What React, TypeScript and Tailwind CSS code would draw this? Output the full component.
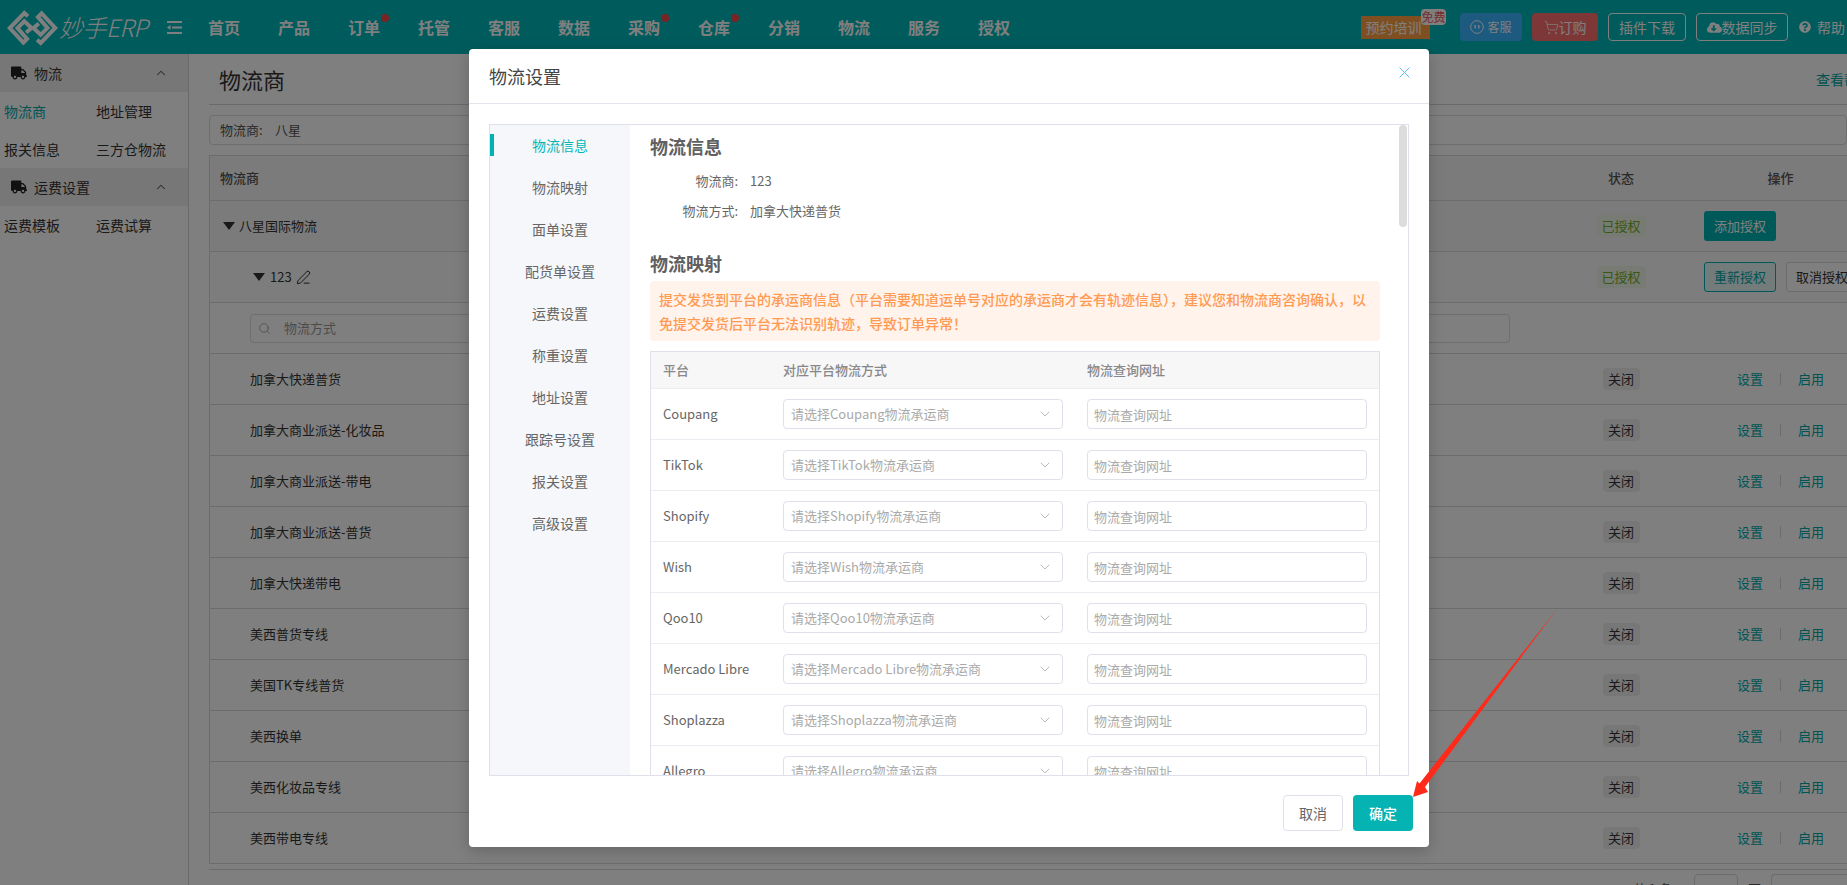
import { ChevronDown, ChevronUp, PenLine, Search, ShoppingCart } from 'lucide-react';
import { FaCloudDownloadAlt, FaQuestionCircle, FaTruck } from 'react-icons/fa';

const navItems = [
  { label: '首页' },
  { label: '产品' },
  { label: '订单', dot: true },
  { label: '托管' },
  { label: '客服' },
  { label: '数据' },
  { label: '采购', dot: true },
  { label: '仓库', dot: true },
  { label: '分销' },
  { label: '物流' },
  { label: '服务' },
  { label: '授权' },
];

const shippingRows = [
  '加拿大快递普货',
  '加拿大商业派送-化妆品',
  '加拿大商业派送-带电',
  '加拿大商业派送-普货',
  '加拿大快递带电',
  '美西普货专线',
  '美国TK专线普货',
  '美西换单',
  '美西化妆品专线',
  '美西带电专线',
];

const settingTabs = ['物流信息', '物流映射', '面单设置', '配货单设置', '运费设置', '称重设置', '地址设置', '跟踪号设置', '报关设置', '高级设置'];

const platforms = ['Coupang', 'TikTok', 'Shopify', 'Wish', 'Qoo10', 'Mercado Libre', 'Shoplazza', 'Allegro'];

function Logo() {
  return (
    <svg width="55" height="40" viewBox="0 0 60 44" fill="none" stroke="#ffffff" strokeWidth="4.4" className="mt-px shrink-0">
      <path d="M25 9 L21 5.5 L5 22 L20 38 L24 34 L13.5 22 L21 14.5 L29 22 L23 27" />
      <path d="M35 35 L39 38.5 L55 22 L40 6 L36 10 L46.5 22 L39 29.5 L31 22 L37 17" />
    </svg>
  );
}

function MenuToggle() {
  return (
    <svg width="15" height="13" viewBox="0 0 15 13" fill="#ffffff" className="shrink-0">
      <rect x="0" y="0" width="15" height="2" />
      <rect x="5" y="5.5" width="10" height="2" />
      <rect x="0" y="11" width="15" height="2" />
      <path d="M3.5 4 L0 6.5 L3.5 9 Z" />
    </svg>
  );
}

function SideGroup({ title, items }: { title: string; items: { label: string; active?: boolean }[] }) {
  return (
    <div>
      <div className="flex h-[38px] items-center bg-[#eeeeee] pl-[11px] pr-[20px] text-[14px] text-[#333]">
        <FaTruck size={16} className="text-[#222]" />
        <span className="ml-[7px] flex-1">{title}</span>
        <ChevronUp size={14} strokeWidth={1.75} className="text-[#555]" />
      </div>
      <div className="grid grid-cols-[92px_1fr] pl-1 text-[14px]">
        {items.map((item) => (
          <div key={item.label} className={`flex h-[38px] items-center whitespace-nowrap ${item.active ? 'text-[#00a8a8]' : 'text-[#333]'}`}>
            {item.label}
          </div>
        ))}
      </div>
    </div>
  );
}

function Caret() {
  return <span className="h-0 w-0 border-x-[6.5px] border-t-[8px] border-x-transparent border-t-[#333]" />;
}

function MainPage() {
  return (
    <main className="w-[1638px] shrink-0 pl-0 text-[#333]">
      <div className="flex h-[51px] items-center justify-between border-b border-[#d4d4d4] pl-[10px]">
        <h1 className="text-[22px] font-normal text-[#333]">物流商</h1>
        <a className="mr-[-25px] whitespace-nowrap text-[14px] text-[#00a8a8]">查看帮助</a>
      </div>

      <div className="mt-[10px] flex h-[30px] items-center rounded-[4px] border border-[#dcdcdc] pl-[10px] text-[13px] text-[#555]">
        <span className="w-[55px]">物流商:</span>
        <span>八星</span>
      </div>

      <div className="mt-[10px] border-l border-t border-[#d9d9d9]">
        <div className="flex h-[45px] items-center border-b border-[#d9d9d9] bg-[#f7f7f7] text-[13px] font-medium text-[#555]">
          <span className="flex-1 pl-[10px]">物流商</span>
          <span className="w-[122px] text-center">状态</span>
          <span className="w-[165px] pl-[32px] text-center">操作</span>
        </div>

        <div className="flex h-[51px] items-center border-b border-[#d9d9d9] bg-[#f7f7f7] text-[13px]">
          <div className="flex flex-1 items-center pl-[13px]">
            <Caret />
            <span className="ml-1">八星国际物流</span>
          </div>
          <div className="flex w-[122px] justify-center">
            <span className="flex h-[22px] w-[49px] items-center justify-center rounded-[4px] bg-[#eef7e6] text-[#6eb02e]">已授权</span>
          </div>
          <div className="w-[165px] pl-[22px]">
            <button className="h-[30px] w-[72px] rounded-[3px] bg-[#00b3b3] text-white">添加授权</button>
          </div>
        </div>

        <div className="flex h-[51px] items-center border-b border-[#d9d9d9] bg-[#fafafa] text-[13px]">
          <div className="flex flex-1 items-center pl-[43px]">
            <Caret />
            <span className="ml-[5px]">123</span>
            <PenLine size={15} strokeWidth={1.5} className="ml-1 text-[#222]" />
          </div>
          <div className="flex w-[122px] justify-center">
            <span className="flex h-[22px] w-[49px] items-center justify-center rounded-[4px] bg-[#eef7e6] text-[#6eb02e]">已授权</span>
          </div>
          <div className="flex w-[165px] shrink-0 gap-[10px] pl-[22px]">
            <button className="h-[30px] w-[72px] shrink-0 rounded-[3px] border border-[#00b3b3] bg-[#e6f7f7] text-[#00a8a8]">重新授权</button>
            <button className="h-[30px] w-[72px] shrink-0 rounded-[3px] border border-[#d9d9d9] bg-white text-[#333]">取消授权</button>
          </div>
        </div>

        <div className="flex h-[51px] items-center border-b border-[#d9d9d9] pl-10">
          <div className="flex h-[29px] w-[1260px] items-center rounded-[4px] border border-[#dcdcdc] pl-[7px] text-[13px] text-[#999]">
            <Search size={13} strokeWidth={1.25} className="text-[#888]" />
            <span className="ml-[13px]">物流方式</span>
          </div>
        </div>

        {shippingRows.map((name) => (
          <div key={name} className="flex h-[51px] items-center border-b border-[#d9d9d9] text-[13px]">
            <span className="flex-1 pl-10">{name}</span>
            <div className="flex w-[122px] justify-center">
              <span className="flex h-[22px] w-[37px] items-center justify-center rounded-[4px] bg-[#eeeeee]">关闭</span>
            </div>
            <div className="flex w-[165px] items-center pl-[55px] text-[#00a8a8]">
              <span>设置</span>
              <span className="mx-[17px] h-3 w-px bg-[#d9d9d9]" />
              <span>启用</span>
            </div>
          </div>
        ))}
      </div>

      <div className="mt-[5px] flex h-10 items-start justify-end gap-[10px] border-t border-[#d9d9d9] pt-1 text-[13px] text-[#555]">
        <span className="mt-[5px] pr-[12px]">共 1 条</span>
        <span className="h-8 w-11 rounded-[4px] border border-[#d9d9d9]" />
        <span className="mt-[5px]">页</span>
        <span className="h-8 w-[76px] rounded-l-[4px] border border-r-0 border-[#d9d9d9]" />
      </div>
    </main>
  );
}

function SettingsModal() {
  return (
    <div className="absolute left-[469px] top-[49px] flex h-[798px] w-[960px] flex-col rounded-[4px] bg-white shadow-[0_4px_16px_rgba(0,0,0,0.2)]">
      <div className="flex h-[55px] shrink-0 items-center justify-between border-b border-[#e4e4ec] pl-5 pr-[19px]">
        <h2 className="text-[18px] font-normal text-[#444]">物流设置</h2>
        <svg width="11" height="11" viewBox="0 0 11 11" stroke="#5cc4ea" strokeWidth="1" className="mb-2">
          <path d="M0.5 0.5 L10.5 10.5 M10.5 0.5 L0.5 10.5" />
        </svg>
      </div>

      <div className="relative mx-5 mt-5 flex h-[652px] shrink-0 overflow-hidden border border-[#dfe0ea]">
        <div className="w-[140px] shrink-0 bg-[#f5f7fb] pt-[9px] text-[14px] text-[#666]">
          {settingTabs.map((tab, i) => (
            <div
              key={tab}
              className={`mb-[20px] flex h-[22px] items-center justify-center ${i === 0 ? 'border-l-4 border-[#00b3b3] pr-1 text-[#00b7b7]' : ''}`}
            >
              {tab}
            </div>
          ))}
        </div>

        <div className="flex-1 pl-5 pr-[28px] pt-[9px]">
          <h3 className="text-[18px] font-bold leading-6 text-[#606060]">物流信息</h3>
          <div className="mt-[13px] flex h-5 items-center text-[13px] text-[#666]">
            <span className="w-[88px] text-right">物流商:</span>
            <span className="ml-[12px]">123</span>
          </div>
          <div className="mt-[10px] flex h-5 items-center text-[13px] text-[#666]">
            <span className="w-[88px] text-right">物流方式:</span>
            <span className="ml-[12px]">加拿大快递普货</span>
          </div>

          <h3 className="mt-[30px] text-[18px] font-bold leading-6 text-[#606060]">物流映射</h3>
          <div className="mt-[6px] whitespace-nowrap rounded-[4px] bg-[#fff3eb] py-[6px] pl-[9px] text-[14px] font-medium leading-6 text-[#ff9a52]">
            提交发货到平台的承运商信息（平台需要知道运单号对应的承运商才会有轨迹信息），建议您和物流商咨询确认，以
            <br />
            免提交发货后平台无法识别轨迹，导致订单异常！
          </div>

          <div className="mt-[10px] border-x border-t border-[#dfe0ea]">
            <div className="flex h-[37px] items-center border-b border-[#ececf2] bg-[#f7f7f8] text-[13px] font-medium text-[#888]">
              <span className="w-[132px] pl-3">平台</span>
              <span className="w-[304px]">对应平台物流方式</span>
              <span>物流查询网址</span>
            </div>
            {platforms.map((name) => (
              <div key={name} className="flex h-[51px] items-center border-b border-[#ececf2] text-[13px] text-[#666]">
                <span className="w-[132px] pl-3">{name}</span>
                <div className="flex h-[30px] w-[280px] items-center justify-between rounded-[4px] border border-[#dfe0ea] pl-[7px] pr-[9px] text-[#aaa]">
                  <span className="whitespace-nowrap">请选择{name}物流承运商</span>
                  <ChevronDown size={16} strokeWidth={1} className="shrink-0 text-[#999]" />
                </div>
                <input
                  readOnly
                  placeholder="物流查询网址"
                  className="ml-6 h-[30px] w-[280px] rounded-[4px] border border-[#dfe0ea] pl-[6px] text-[13px] outline-none placeholder:text-[#aaa]"
                />
              </div>
            ))}
          </div>
        </div>

        <div className="absolute right-px top-0 h-[102px] w-2 rounded-full bg-[#dcdcdc]" />
      </div>

      <div className="flex flex-1 items-start justify-end gap-[10px] pr-4 pt-[19px] text-[14px]">
        <button className="h-9 w-[60px] rounded-[4px] border border-[#dfe0ea] bg-white text-[#666]">取消</button>
        <button className="h-9 w-[60px] rounded-[4px] bg-[#04b3b2] font-medium text-white">确定</button>
      </div>
    </div>
  );
}

export default function App() {
  return (
    <div className="relative h-[885px] w-[1847px] overflow-hidden bg-white font-['Noto_Sans_CJK_SC','Noto_Sans',sans-serif]">
      <header className="flex h-[54px] items-center bg-[#00b6b8] text-white">
        <div className="flex w-[189px] shrink-0 items-center pl-[5px]">
          <Logo />
          <span className="ml-[-1px] whitespace-nowrap text-[24px] font-light italic leading-none tracking-[-0.5px]">妙手ERP</span>
          <span className="ml-[19px]">
            <MenuToggle />
          </span>
        </div>
        <nav className="flex">
          {navItems.map((item) => (
            <div key={item.label} className="relative w-[70px] text-center text-[16px] font-bold">
              {item.label}
              {item.dot && <span className="absolute left-[52px] top-[-1px] h-2 w-2 rounded-full bg-[#f04848]" />}
            </div>
          ))}
        </nav>
        <div className="ml-auto flex items-center pr-[2px] text-[14px]">
          <div className="relative flex h-[23px] w-[69px] items-center justify-center bg-[#ff9f45] pr-1">
            预约培训
            <span className="absolute left-[60px] top-[-7px] flex h-4 w-[25px] items-center justify-center rounded-[4px] bg-[#ffffff] text-[12px] text-[#ef5a5a]">免费</span>
          </div>
          <div className="ml-[30px] flex h-7 w-[62px] items-center justify-center gap-[3px] rounded-[4px] bg-[#38b4ff] text-[12px]">
            <svg width="14" height="14" viewBox="0 0 14 14" fill="none" stroke="currentColor" strokeWidth="1">
              <circle cx="7" cy="7" r="6.3" />
              <path d="M5.2 5 V8.6 M8.8 5 V8.6" strokeWidth="1.4" />
            </svg>
            客服
          </div>
          <div className="ml-[10px] flex h-7 w-[66px] items-center justify-center rounded-[4px] bg-[#fa6e6e]">
            <ShoppingCart size={15} strokeWidth={1.25} />
            订购
          </div>
          <div className="ml-[10px] flex h-7 w-[78px] items-center justify-center rounded-[4px] border border-white">插件下载</div>
          <div className="ml-[10px] flex h-7 w-[92px] items-center justify-center rounded-[4px] border border-white">
            <FaCloudDownloadAlt size={15} />
            数据同步
          </div>
          <FaQuestionCircle size={12} className="ml-[11px]" />
          <span className="ml-[6px]">帮助</span>
        </div>
      </header>

      <div className="flex h-[831px]">
        <aside className="w-[189px] shrink-0 border-r border-[#d4d4d4]">
          <SideGroup title="物流" items={[{ label: '物流商', active: true }, { label: '地址管理' }, { label: '报关信息' }, { label: '三方仓物流' }]} />
          <SideGroup title="运费设置" items={[{ label: '运费模板' }, { label: '运费试算' }]} />
        </aside>
        <div className="pl-5">
          <MainPage />
        </div>
      </div>

      <div className="absolute inset-0 bg-black/50" />
      <SettingsModal />

      <svg width="160" height="205" viewBox="0 0 160 205" className="absolute left-[1405px] top-[600px]">
        <polygon points="152,9 20,187 23,192 8,197 12,181 14.5,183.5" fill="#ff2a1a" />
      </svg>
    </div>
  );
}
